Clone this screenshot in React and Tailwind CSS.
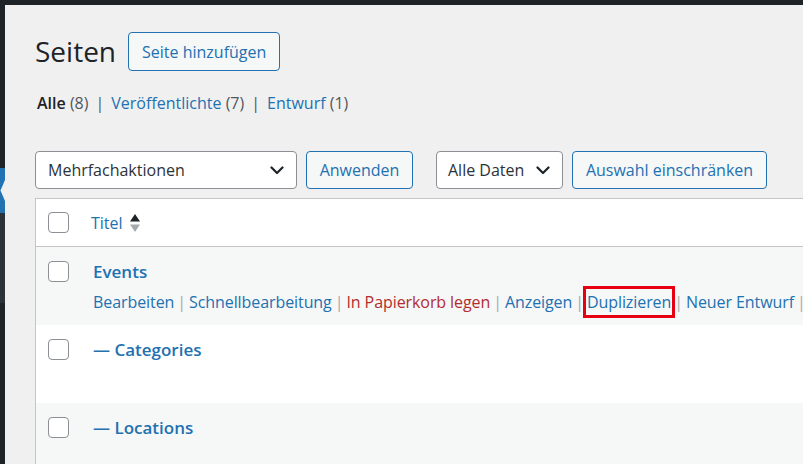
import React from 'react';

const font = { fontFamily: '"Open Sans", "Noto Sans", sans-serif' };

const Chevron = () => (
    <svg width="14" height="9" viewBox="0 0 14 9" fill="none">
        <path d="M1.5 1.5 L7 7 L12.5 1.5" stroke="#1d2327" strokeWidth="2.2" strokeLinecap="round" strokeLinejoin="round" />
    </svg>
);

const Checkbox = () => (
    <span className="block w-[21px] h-[21px] rounded-[4px] border border-[#8c8f94] bg-white"></span>
);

const Sep = ({ className = 'mx-[3px] text-[#a7aaad]' }) => <span className={className}>|</span>;

const Sidebar = () => (
    <div className="w-[5px] flex flex-col shrink-0">
        <div className="h-[163px] bg-[#1d2327]"></div>
        <svg width="5" height="45" viewBox="0 0 5 45" className="block">
            <rect width="5" height="45" fill="#2271b1" />
            <polygon points="5,12 0.5,22.5 5,33" fill="#f0f0f1" />
        </svg>
        <div className="h-[90px] bg-[#2c3338]"></div>
        <div className="flex-1 bg-[#1d2327]"></div>
    </div>
);

const rows = [
    { title: 'Events', actions: true, bg: 'bg-[#f6f7f7]' },
    { title: '— Categories', bg: 'bg-white' },
    { title: '— Locations', bg: 'bg-[#f6f7f7]' },
];

const App = () => {
    return (
        <div className="w-[803px] h-[464px] overflow-hidden bg-[#1d2327] flex flex-col text-[16px] text-[#3c434a]" style={font}>
            <div className="h-[5px] bg-[#1d2327] shrink-0"></div>
            <div className="flex flex-1 min-h-0">
                <Sidebar />

                <div className="flex-1 bg-[#f0f0f1] pl-[30px] pt-[27px] overflow-hidden">
                    {/* Heading */}
                    <div className="flex items-center">
                        <h1 className="text-[28px] leading-[39px] text-[#1d2327] mr-[12px]">Seiten</h1>
                        <button className="h-[39px] px-[13px] rounded-[4px] border border-[#2271b1] bg-[#f6f7f7] text-[#2271b1] text-[16px]">
                            Seite hinzufügen
                        </button>
                    </div>

                    {/* Status filter */}
                    <div className="mt-[21px] ml-[2px] leading-[22px]">
                        <span className="font-semibold text-[#1d2327]">Alle</span>
                        <span className="text-[#50575e]"> (8)</span>
                        <Sep className="text-[#50575e] mx-[7px]" />
                        <span className="text-[#2271b1]">Veröffentlichte</span>
                        <span className="text-[#50575e]"> (7)</span>
                        <Sep className="text-[#50575e] mx-[7px]" />
                        <span className="text-[#2271b1]">Entwurf</span>
                        <span className="text-[#50575e]"> (1)</span>
                    </div>

                    {/* Table nav */}
                    <div className="flex items-center mt-[37px] h-[38px]">
                        <div className="w-[262px] h-[38px] flex items-center justify-between pl-[12px] pr-[12px] bg-white border border-[#8c8f94] rounded-[4px] text-[#2c3338]">
                            <span>Mehrfachaktionen</span>
                            <Chevron />
                        </div>
                        <button className="ml-[9px] w-[107px] h-[38px] rounded-[4px] border border-[#2271b1] bg-[#f6f7f7] text-[#2271b1]">
                            Anwenden
                        </button>
                        <div className="ml-[23px] w-[127px] h-[38px] flex items-center justify-between pl-[11px] pr-[12px] bg-white border border-[#8c8f94] rounded-[4px] text-[#2c3338]">
                            <span>Alle Daten</span>
                            <Chevron />
                        </div>
                        <button className="ml-[9px] w-[195px] h-[38px] rounded-[4px] border border-[#2271b1] bg-[#f6f7f7] text-[#2271b1]">
                            Auswahl einschränken
                        </button>
                    </div>

                    {/* Table */}
                    <div className="mt-[9px] w-[800px] border-l border-t border-[#c3c4c7] bg-white">
                        <div className="h-[48px] flex items-center border-b border-[#c3c4c7] bg-white">
                            <div className="w-[55px] pl-[12px]"><Checkbox /></div>
                            <span className="text-[#2271b1]">Titel</span>
                            <svg width="12" height="20" viewBox="0 0 12 20" className="ml-[6px]">
                                <polygon points="6,1 11,8.5 1,8.5" fill="#1d2327" />
                                <polygon points="1,11.5 11,11.5 6,19" fill="#a7aaad" />
                            </svg>
                        </div>

                        {rows.map((row) => (
                            <div key={row.title} className={`h-[78px] flex items-start pt-[14px] ${row.bg}`}>
                                <div className="w-[57px] pl-[12px] shrink-0"><Checkbox /></div>
                                <div>
                                    <div className="font-semibold text-[17px] leading-[22px] text-[#2271b1]">{row.title}</div>
                                    {row.actions && (
                                        <div className="mt-[7px] leading-[24px] whitespace-nowrap tracking-[-0.08px]">
                                            <span className="text-[#2271b1]">Bearbeiten</span>
                                            <Sep />
                                            <span className="text-[#2271b1]">Schnellbearbeitung</span>
                                            <Sep />
                                            <span className="text-[#b32d2e]">In Papierkorb legen</span>
                                            <Sep />
                                            <span className="text-[#2271b1]">Anzeigen</span>
                                            <Sep />
                                            <span className="inline-block leading-[24px] text-[#2271b1] outline-[3px] outline-solid outline-[#e60012] outline-offset-[1px]">Duplizieren</span>
                                            <Sep />
                                            <span className="text-[#2271b1]">Neuer Entwurf</span>
                                            <Sep />
                                        </div>
                                    )}
                                </div>
                            </div>
                        ))}
                    </div>
                </div>
            </div>
        </div>
    );
};

export default App;
